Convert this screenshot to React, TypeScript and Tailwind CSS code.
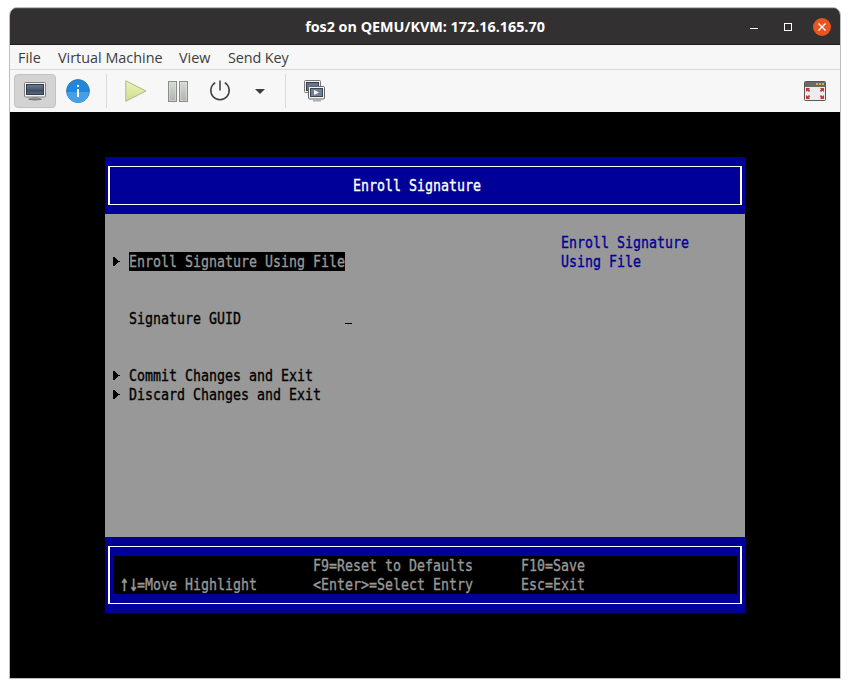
import type { ReactNode } from "react";

const termFont =
  "block origin-[0_0] scale-y-[1.22] whitespace-pre text-[13.29px] leading-[15px] [-webkit-text-stroke:0.3px_currentColor] font-['DejaVu_Sans_Mono',monospace]";

function Term({ children }: { children: ReactNode }) {
  return (
    <div className="h-[19px]">
      <span className={termFont}>{children}</span>
    </div>
  );
}

function Arrow() {
  return (
    <svg className="h-[19px] w-[8px] shrink-0" viewBox="0 0 8 19" shapeRendering="crispEdges">
      <path d="M0 5h2v1h1v1h1v1h1v1h2v1H5v1H4v1H3v1H2v1H0z" fill="#000" />
    </svg>
  );
}

function MonitorIcon() {
  return (
    <svg width="24" height="20" viewBox="0 0 24 20">
      <defs>
        <linearGradient id="scr" x1="0" y1="0" x2="0" y2="1">
          <stop offset="0" stopColor="#6b7a90" />
          <stop offset=".5" stopColor="#4c5b72" />
          <stop offset=".55" stopColor="#3c4a60" />
          <stop offset="1" stopColor="#5c6a80" />
        </linearGradient>
      </defs>
      <ellipse cx="12" cy="18.2" rx="7" ry="1.3" fill="#777" />
      <path d="M9 16h6v2H9z" fill="#999" />
      <rect x="1.5" y="1.5" width="21" height="14.5" rx="1" fill="#f2f2f0" stroke="#808080" />
      <rect x="3.5" y="3.5" width="17" height="10" fill="url(#scr)" stroke="#303a49" />
    </svg>
  );
}

function InfoIcon() {
  return (
    <svg width="24" height="24" viewBox="0 0 24 24">
      <circle cx="12" cy="12" r="11.4" fill="#2187dc" stroke="#3579ad" />
      <path d="M1.2 13h21.6a10.8 10.8 0 0 1-21.6 0z" fill="#46a0e5" />
      <path d="M11 6h2v2h-2zM11 10h2v8h-2z" fill="#fff" />
    </svg>
  );
}

function PlayIcon() {
  return (
    <svg width="22" height="22" viewBox="0 0 22 22">
      <defs>
        <linearGradient id="pl" x1="0" y1="0" x2="0" y2="1">
          <stop offset="0" stopColor="#eef2ba" />
          <stop offset="1" stopColor="#cfdf8d" />
        </linearGradient>
      </defs>
      <path d="M.8.8v20.4L21 11z" fill="url(#pl)" stroke="#a5bd83" />
    </svg>
  );
}

function PauseIcon() {
  return (
    <svg width="20" height="21" viewBox="0 0 20 21">
      <defs>
        <linearGradient id="pa" x1="0" y1="0" x2="0" y2="1">
          <stop offset="0" stopColor="#d8dad6" />
          <stop offset="1" stopColor="#b0b2ae" />
        </linearGradient>
      </defs>
      {[0.5, 11.5].map((x) => (
        <g key={x}>
          <rect x={x} y=".5" width="8" height="20" fill="url(#pa)" stroke="#8a8c88" />
          <rect x={x + 1} y="1.5" width="6" height="18" fill="none" stroke="#e4e5e2" strokeOpacity=".5" />
        </g>
      ))}
    </svg>
  );
}

function PowerIcon() {
  return (
    <svg width="22" height="22" viewBox="0 0 22 22" fill="none" stroke="#3d3d3d" strokeWidth="1.5">
      <path d="M6.2 2.7a9.2 9.2 0 1 0 9.6 0M11 .5v10" />
    </svg>
  );
}

function SnapshotsIcon() {
  return (
    <svg width="22" height="22" viewBox="0 0 22 22">
      <rect x=".5" y=".5" width="16" height="12" rx="1" fill="#f1f1ef" stroke="#777" />
      <rect x="2.5" y="2.5" width="12" height="8" fill="#66758a" stroke="#343e4e" />
      <path d="M9 20h8v1.5H9z" fill="#aaa" />
      <rect x="4.5" y="6.5" width="16" height="12.5" rx="1" fill="#f1f1ef" stroke="#686868" />
      <rect x="6.5" y="8.5" width="12" height="8" fill="#718097" stroke="#384557" />
      <path d="M10 10v5l5-2.5z" fill="#fff" />
    </svg>
  );
}

function FullscreenIcon() {
  return (
    <svg width="22" height="20" viewBox="0 0 22 20">
      <rect x=".5" y=".5" width="21" height="19" rx="1" fill="#ececec" stroke="#555753" />
      <path d="M1 1h20v5H1z" fill="#686a66" />
      <path d="M12 2h2v2h-2zM15 2h2v2h-2zM18 2h2v2h-2z" fill="#e0ad38" />
      <g fill="#c4393f">
        <path d="M2 7h4l-1 1.3L6.2 9.8 5 11 3.5 9.8 2 11z" />
        <path d="M20 7h-4l1 1.3-1.2 1.5L17 11l1.5-1.2L20 11z" />
        <path d="M2 18h4l-1-1.3 1.2-1.5L5 14l-1.5 1.2L2 14z" />
        <path d="M20 18h-4l1-1.3-1.2-1.5L17 14l1.5 1.2L20 14z" />
      </g>
    </svg>
  );
}

function TitleBar() {
  return (
    <header className="flex h-[37px] items-center border-t border-b border-t-[#4c4a4b] border-b-[#1f1e1e] bg-[#323031] pr-[9px] pl-[90px]">
      <h1 className="flex-1 text-center font-['Open_Sans',sans-serif] text-[14.35px] leading-[20px] font-bold whitespace-nowrap text-white">
        fos2 on QEMU/KVM: 172.16.165.70
      </h1>
      <div className="flex items-center">
        <span className="mt-[4px] mr-[26px] h-px w-2 bg-white" />
        <span className="mr-[21px] size-2 border border-white" />
        <svg width="18" height="18" viewBox="0 0 18 18">
          <circle cx="9" cy="9" r="9" fill="#e95420" />
          <path d="M5.5 5.5l7 7M12.5 5.5l-7 7" stroke="#fff" strokeWidth="1.4" />
        </svg>
      </div>
    </header>
  );
}

function MenuBar() {
  return (
    <nav className="flex h-[25px] items-center border-b border-[#dadada] bg-[#f7f7f7] pt-[2px] pl-2 font-['Open_Sans',sans-serif] text-[14.4px] leading-[22px] text-[#3d3d3d]">
      <span className="w-10 whitespace-nowrap">File</span>
      <span className="w-[121px] whitespace-nowrap">Virtual Machine</span>
      <span className="w-[49px] whitespace-nowrap">View</span>
      <span className="whitespace-nowrap tracking-[-0.1px]">Send Key</span>
    </nav>
  );
}

function Toolbar() {
  return (
    <div className="flex h-[42px] items-center bg-[#f7f7f7] pl-1">
      <div className="flex h-[34px] w-[42px] items-center justify-center rounded border border-[#c2c2c2] bg-[#d3d3d3]">
        <MonitorIcon />
      </div>
      <div className="ml-[10px]"><InfoIcon /></div>
      <div className="ml-4 h-[34px] w-px bg-[#dadada]" />
      <div className="ml-[18px]"><PlayIcon /></div>
      <div className="ml-[21px]"><PauseIcon /></div>
      <div className="ml-[21px]"><PowerIcon /></div>
      <svg className="ml-6" width="10" height="5" viewBox="0 0 10 5"><path d="M0 0h10L5 5z" fill="#3d3d3d" /></svg>
      <div className="ml-5 h-[34px] w-px bg-[#dadada]" />
      <div className="ml-[18px]"><SnapshotsIcon /></div>
      <div className="mr-[14px] ml-auto"><FullscreenIcon /></div>
    </div>
  );
}

function Firmware() {
  return (
    <main className="flex h-[566px] justify-center bg-black pt-[45px]">
      <div className="h-[456px] w-[640px]">
        <div className="h-[57px] bg-[#000099] px-[3px] pt-[9px]">
          <div className="h-[39px] border-x-2 border-y border-white pt-[9px] pl-[243px] text-white">
            <Term>Enroll Signature</Term>
          </div>
        </div>
        <div className="flex h-[323px] bg-[#989898] pt-[19px] text-black">
          <div className="w-[456px] pt-[19px] pl-2">
            <div className="flex gap-2">
              <Arrow />
              <div className="w-[216px] bg-black text-[#989898]">
                <Term>Enroll Signature Using File</Term>
              </div>
            </div>
            <div className="mt-[38px] flex pl-4">
              <div className="w-[216px]"><Term>Signature GUID</Term></div>
              <span className="mt-[14px] h-px w-[7px] bg-black" />
            </div>
            <div className="mt-[38px] flex gap-2"><Arrow /><Term>Commit Changes and Exit</Term></div>
            <div className="flex gap-2"><Arrow /><Term>Discard Changes and Exit</Term></div>
          </div>
          <div className="text-[#000099]">
            <Term>Enroll Signature</Term>
            <Term>Using File</Term>
          </div>
        </div>
        <div className="h-[76px] bg-[#000099] px-[3px] pt-[9px]">
          <div className="h-[58px] border-x-2 border-y border-white px-[3px] pt-[9px]">
            <div className="flex h-[38px] bg-black pl-2 text-[#989898]">
              <div className="w-[192px] pt-[19px]">
                <Term>
                  <span className="inline-block h-[15px] origin-[50%_65%] scale-[1.15_1.4] align-top">↑↓</span>=Move Highlight
                </Term>
              </div>
              <div className="w-[208px]">
                <Term>F9=Reset to Defaults</Term>
                <Term>{"<Enter>=Select Entry"}</Term>
              </div>
              <div>
                <Term>F10=Save</Term>
                <Term>Esc=Exit</Term>
              </div>
            </div>
          </div>
        </div>
      </div>
    </main>
  );
}

export default function App() {
  return (
    <div className="h-[688px] w-[850px] bg-white pt-[7px] pl-[9px]">
      <div className="h-[672px] w-[832px] overflow-hidden rounded-t-[8px] border border-[#bdbdbd]">
        <TitleBar />
        <MenuBar />
        <Toolbar />
        <Firmware />
      </div>
    </div>
  );
}
